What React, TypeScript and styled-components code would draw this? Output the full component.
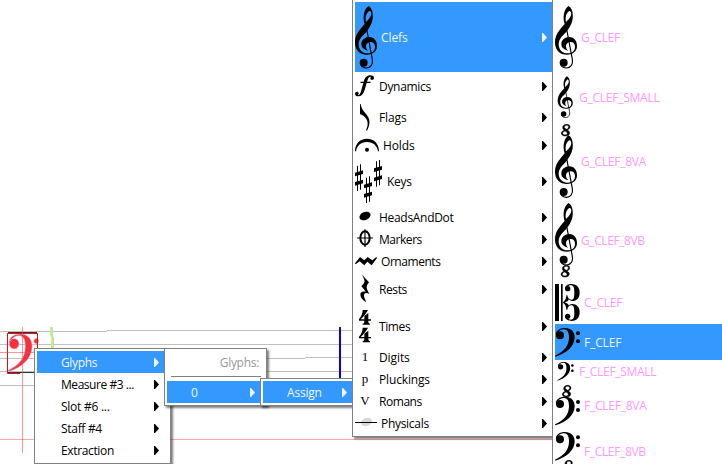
import React from "react";
import styled, { createGlobalStyle } from "styled-components";

const GlobalStyle = createGlobalStyle`
  * { box-sizing: border-box; }
  body { margin: 0; background: #fff; overflow: hidden; }
`;

const Desktop = styled.main`
  position: relative;
  width: 722px;
  height: 464px;
  overflow: hidden;
  background: #fff;
  font: 12px/16px "Open Sans", "Noto Sans", sans-serif;
  color: #000;
`;

const Score = styled.svg`
  position: absolute;
  inset: 0;
`;

const Menu = styled.nav<{ $x: number; $y: number; $w: number; $h: number; $shadow?: boolean }>`
  position: absolute;
  left: ${(p) => p.$x}px;
  top: ${(p) => p.$y}px;
  width: ${(p) => p.$w}px;
  height: ${(p) => p.$h}px;
  padding: 2px;
  border: 1px solid #808080;
  background: #fff;
  display: flex;
  flex-direction: column;
  box-shadow: ${(p) => (p.$shadow ? "2px 2px 2px rgba(0, 0, 0, 0.5)" : "none")};
`;

const IconMenu = styled(Menu)`
  padding-right: 0;
`;

const Row = styled.div<{ $h?: number; $active?: boolean; $tint?: string; $indent?: number; $end?: number }>`
  flex: none;
  display: flex;
  align-items: center;
  gap: 4px;
  height: ${(p) => p.$h ?? 22}px;
  padding-left: ${(p) => p.$indent ?? 0}px;
  padding-right: ${(p) => p.$end ?? 6}px;
  background: ${(p) => (p.$active ? "#3399ff" : "transparent")};
  color: ${(p) => (p.$active ? "#f4f4f4" : p.$tint ?? "#000")};
`;

const IconSlot = styled.span`
  flex: none;
  display: flex;
  justify-content: center;
  min-width: 20px;
  color: #000;

  svg { display: block; overflow: visible; }
`;

const Label = styled.span<{ $ls?: number; $odd?: boolean }>`
  flex: 1;
  padding-top: ${(p) => (p.$odd ? 1 : 2)}px;
  white-space: nowrap;
  letter-spacing: ${(p) => p.$ls ?? 0}px;
`;

const Heading = styled.div`
  height: 25px;
  padding: 4px 5px 0 0;
  text-align: right;
  color: #999;
  letter-spacing: -0.3px;
`;

const Divider = styled.hr`
  width: 90px;
  height: 1px;
  margin: 0 0 4px 4px;
  border: 0;
  background: #808080;
`;

const SerifGlyph = styled.span`
  font: 13px/14px "Liberation Serif", serif;
  padding-bottom: 1px;
`;

const Arrow = () => (
  <svg width="5" height="9" viewBox="0 0 5 9">
    <path d="M0 0H1L5 4.5L1 9H0Z" fill="currentColor" />
  </svg>
);

const GShape = () => (
  <g>
    <path
      fillRule="evenodd"
      d="M29 54C22 34 27 8 41 0C51 7 55 20 53 38C50 57 40 70 30 82C18 94 11 102 11 116C12 132 22 142 38 142C53 141 60 134 60 122C60 113 55 108 47 108C38 108 33 114 33 120C33 127 35 131 40 134C27 132 19 124 19 115C19 102 30 93 43 93C58 93 66 106 66 120C66 136 54 146 36 146C15 146 0 132 0 110C0 87 13 73 23 61ZM33 48C46 37 51 26 48 19C46 14 42 14 40 17C32 25 31 34 33 48Z"
    />
    <path d="M31 48L52 160C55 176 46 186 34 186C26 186 20 183 17 175" fill="none" stroke="currentColor" strokeWidth="3.5" />
    <circle cx="26" cy="170" r="12" />
  </g>
);

const EightShape = () => (
  <path
    fillRule="evenodd"
    stroke="currentColor"
    strokeWidth="1.5"
    d="M16 0C22 0 26 3 26 8C26 12 22 15 18 17C22 20 25 22 25 26C25 32 19 35 12 35C5 35 0 32 0 27C0 22 4 20 9 18C6 15 4 13 4 10C4 4 9 0 16 0ZM16 3C12 3 9 5 9 8C9 11 12 13 16 15C20 13 22 11 22 7C22 5 19 3 16 3ZM11 20C6 22 4 24 4 27C4 30 7 32 11 32C16 32 18 30 18 27C18 24 15 22 11 20Z"
  />
);

const FShape = () => (
  <g>
    <path d="M3 22C1 8 14 0 30 0C48 0 59 11 59 28C59 56 34 76 1 86L0 83C27 71 42 54 42 28C42 12 37 4 27 4C18 4 11 8 9 15Z" />
    <circle cx="15" cy="22" r="12" />
    <circle cx="69" cy="16" r="6" />
    <circle cx="69" cy="40" r="6" />
  </g>
);

const GClef = () => (
  <svg width="22" height="63" viewBox="0 0 66 189" fill="currentColor"><GShape /></svg>
);
const GClefSmall = () => (
  <svg width="16" height="42" viewBox="-3 -1 70 189" fill="currentColor" preserveAspectRatio="none"><GShape /></svg>
);
const GClefUp = () => (
  <svg width="22" height="75" viewBox="0 0 66 225" fill="currentColor">
    <g transform="translate(19 1)"><EightShape /></g>
    <g transform="translate(0 34)"><GShape /></g>
  </svg>
);
const GClefDown = () => (
  <svg width="22" height="74" viewBox="0 0 66 222" fill="currentColor">
    <GShape />
    <g transform="translate(18 187)"><EightShape /></g>
  </svg>
);
const CClef = () => (
  <svg width="25" height="37" viewBox="0 0 75 111" fill="currentColor">
    <path d="M0 0H12V111H0ZM18 0H23V111H18Z" />
    {["", "matrix(1 0 0 -1 0 111)"].map((t) => (
      <g key={t} transform={t}>
        <path d="M30 14C31 4 40 0 50 0C66 0 74 11 74 26C74 42 65 51 52 51C46 51 43 48 42 46C39 52 35 54 27 56H22C30 51 34 44 34 34H37C38 42 43 47 49 47C56 47 58 41 58 26C58 11 56 4 47 4C43 4 40 6 39 8Z" />
        <circle cx="38" cy="14" r="8" />
      </g>
    ))}
  </svg>
);
const FClef = () => (
  <svg width="25" height="29" viewBox="0 0 75 87" fill="currentColor"><FShape /></svg>
);
const FClefSmall = () => (
  <svg width="17" height="19" viewBox="0 0 75 87" fill="currentColor"><FShape /></svg>
);
const FClefUp = () => (
  <svg width="25" height="41" viewBox="0 0 75 123" fill="currentColor">
    <g transform="translate(22 1)"><EightShape /></g>
    <g transform="translate(0 35)"><FShape /></g>
  </svg>
);
const FClefDown = () => (
  <svg width="25" height="40" viewBox="0 0 75 120" fill="currentColor">
    <FShape />
    <g transform="translate(26 85)"><EightShape /></g>
  </svg>
);

const Forte = () => (
  <svg width="20" height="23" viewBox="0 0 60 69" fill="currentColor">
    <path d="M17 20H26C29 8 36 1 46 1C53 1 57 4 57 9C57 13 54 15 51 15C48 15 46 13 46 10C46 8 47 7 48 5C42 4 39 10 36 20H47L46 24H35L29 45C25 57 19 64 10 64C4 64 0 61 0 56C0 52 3 50 6 50C9 50 11 52 11 55C11 58 9 59 8 60C14 61 17 54 19 45L25 24H16Z" />
  </svg>
);
const Flag = () => (
  <svg width="10" height="27" viewBox="0 0 30 81" fill="currentColor">
    <path d="M0 0H2C4 15 12 22 20 32C29 43 33 58 21 80L18 79C26 61 24 50 15 40C10 35 5 32 0 31Z" />
  </svg>
);
const Fermata = () => (
  <svg width="24" height="16" viewBox="0 0 72 48" fill="currentColor">
    <path d="M0 40C0 18 14 2 36 2C58 2 72 18 72 40H69C66 23 55 12 36 12C17 12 6 23 3 40Z" />
    <circle cx="36" cy="35" r="6" />
  </svg>
);
const Sharps = () => (
  <svg width="28" height="43" viewBox="0 0 84 129" fill="currentColor">
    {[[0, 13], [27, 49], [57, 0]].map(([x, y]) => (
      <g key={x} transform={`translate(${x} ${y})`}>
        <path d="M6 4H9V80H6ZM15 0H18V76H15Z" />
        <path d="M0 25L24 18V29L0 36ZM0 53L24 46V57L0 64Z" />
      </g>
    ))}
  </svg>
);
const NoteHead = () => (
  <svg width="12" height="12" viewBox="0 0 12 12">
    <ellipse cx="6" cy="5" rx="5.8" ry="4" transform="rotate(-22 6 5)" fill="currentColor" />
  </svg>
);
const Coda = () => (
  <svg width="16" height="20" viewBox="0 0 48 60" fill="none" stroke="currentColor">
    <ellipse cx="24" cy="27" rx="14" ry="20" strokeWidth="6" />
    <path d="M24 1V54M0 27H48" strokeWidth="3.5" />
  </svg>
);
const Mordent = () => (
  <svg width="22" height="10" viewBox="0 0 66 30" fill="currentColor">
    <path d="M0 22L15 3L28 13L38 3L52 13L64 3L66 6L50 28L37 17L28 28L14 16L2 25Z" />
  </svg>
);
const QuarterRest = () => (
  <svg width="10" height="28" viewBox="0 0 30 84" fill="currentColor">
    <path d="M8 0C14 9 22 16 27 22C20 30 18 37 22 45L28 57C19 52 12 54 12 61C12 67 15 73 18 79L16 80C8 74 1 66 1 59C1 51 9 48 17 51C13 44 8 39 4 33C12 27 16 20 12 12C10 7 8 4 7 1Z" />
  </svg>
);
const TimeFour = () => (
  <svg width="12" height="33" viewBox="0 0 36 99" fill="currentColor">
    {[0, 53].map((y) => (
      <path
        key={y}
        transform={`translate(0 ${y})`}
        d="M11 0H27C21 12 12 21 5 28H16V18L28 9V28H36V32H28C28 38 29 40 33 41V44H11V41C15 40 16 38 16 32H0V27C7 19 11 10 11 0Z"
      />
    ))}
  </svg>
);
const LedgerHead = () => (
  <svg width="22" height="12" viewBox="0 0 22 12">
    <ellipse cx="11.5" cy="5" rx="5.6" ry="4" transform="rotate(-18 11.5 5)" fill="#d8d8d8" />
    <path d="M0 5.5H22" stroke="#000" />
  </svg>
);

type Entry = { name: string; h: number; icon: React.ReactNode; ls?: number; active?: boolean };

const families: Entry[] = [
  { name: "Clefs", h: 70, icon: <GClef />, ls: -0.1, active: true },
  { name: "Dynamics", h: 29, icon: <Forte />, ls: -0.3 },
  { name: "Flags", h: 33, icon: <Flag />, ls: -0.1 },
  { name: "Holds", h: 23, icon: <Fermata />, ls: -0.1 },
  { name: "Keys", h: 49, icon: <Sharps />, ls: -0.3 },
  { name: "HeadsAndDot", h: 22, icon: <NoteHead />, ls: -0.3 },
  { name: "Markers", h: 22, icon: <Coda />, ls: -0.45 },
  { name: "Ornaments", h: 22, icon: <Mordent />, ls: -0.45 },
  { name: "Rests", h: 34, icon: <QuarterRest />, ls: -0.4 },
  { name: "Times", h: 40, icon: <TimeFour />, ls: -0.4 },
  { name: "Digits", h: 22, icon: <SerifGlyph>1</SerifGlyph>, ls: -0.1 },
  { name: "Pluckings", h: 22, icon: <SerifGlyph>p</SerifGlyph>, ls: -0.15 },
  { name: "Romans", h: 22, icon: <SerifGlyph>V</SerifGlyph>, ls: -0.45 },
  { name: "Physicals", h: 22, icon: <LedgerHead />, ls: -0.3 },
];

const clefs: Entry[] = [
  { name: "G_CLEF", h: 70, icon: <GClef />, ls: -0.3 },
  { name: "G_CLEF_SMALL", h: 50, icon: <GClefSmall />, ls: -0.25 },
  { name: "G_CLEF_8VA", h: 78, icon: <GClefUp />, ls: -0.25 },
  { name: "G_CLEF_8VB", h: 80, icon: <GClefDown />, ls: -0.4 },
  { name: "C_CLEF", h: 44, icon: <CClef />, ls: -0.2 },
  { name: "F_CLEF", h: 36, icon: <FClef />, ls: -0.15, active: true },
  { name: "F_CLEF_SMALL", h: 22, icon: <FClefSmall />, ls: -0.3 },
  { name: "F_CLEF_8VA", h: 47, icon: <FClefUp />, ls: -0.25 },
  { name: "F_CLEF_8VB", h: 45, icon: <FClefDown />, ls: -0.35 },
];

const actions = [
  { name: "Glyphs", ls: -0.35, active: true },
  { name: "Measure #3 ...", ls: -0.45 },
  { name: "Slot #6 ...", ls: -0.25 },
  { name: "Staff #4", ls: -0.3 },
  { name: "Extraction", ls: -0.35 },
];

const ScoreSheet = () => (
  <Score width="722" height="464" viewBox="0 0 722 464">
    <g fill="none" stroke="#c0c0c0">
      <path d="M0 331.5H107M107 330.5H352M0 344.5H352M0 358.5H305M305 357.5H352M0 371.5H352M0 385.5H352" />
    </g>
    <rect x="0" y="439" width="552" height="1" fill="#ffa8a8" />
    <path d="M51 327V336M52 335V348" stroke="#c8f56a" strokeWidth="2" />
    <path d="M52.5 327V337M53.5 337V348" stroke="#c8c8f4" />
    <path d="M340 327V378" stroke="#0000ff" strokeWidth="2" />
    <path d="M340 327V330" stroke="#222" strokeWidth="2" />
    <g transform="translate(8 334) scale(0.41 0.44)" fill="#f8303c" stroke="#c8c8f4" strokeWidth="1.5">
      <FShape />
    </g>
    <path d="M8 332.5H37M8 372.5H37" stroke="#333" />
    <path d="M7.5 333.5H37.5V373M7.5 333V373.5H20" fill="none" stroke="#e80c0c" />
    <path d="M22.5 327V453M0 352.5H34" stroke="#ff5050" strokeOpacity="0.6" />
  </Score>
);

export default function App() {
  return (
    <>
      <GlobalStyle />
      <Desktop>
        <ScoreSheet />
        <Menu $x={34} $y={348} $w={137} $h={116} $shadow>
          {actions.map((a) => (
            <Row key={a.name} $active={a.active} $indent={24} $end={9}>
              <Label $ls={a.ls}>{a.name}</Label>
              <Arrow />
            </Row>
          ))}
        </Menu>
        <Menu $x={164} $y={348} $w={103} $h={58} $shadow>
          <Heading>Glyphs:</Heading>
          <Divider />
          <Row $active $indent={24} $end={9}>
            <Label>0</Label>
            <Arrow />
          </Row>
        </Menu>
        <Menu $x={260} $y={378} $w={103} $h={28} $shadow>
          <Row $active $indent={24} $end={13}>
            <Label $ls={-0.2}>Assign</Label>
            <Arrow />
          </Row>
        </Menu>
        <IconMenu $x={352} $y={-1} $w={201} $h={438} $shadow>
          {families.map((f) => (
            <Row key={f.name} $h={f.h} $active={f.active} $end={5}>
              <IconSlot>{f.icon}</IconSlot>
              <Label $ls={f.ls} $odd={f.h % 2 === 1}>{f.name}</Label>
              <Arrow />
            </Row>
          ))}
        </IconMenu>
        <IconMenu $x={552} $y={-1} $w={180} $h={480}>
          {clefs.map((c) => (
            <Row key={c.name} $h={c.h} $active={c.active} $tint="#ff99ff">
              <IconSlot>{c.icon}</IconSlot>
              <Label $ls={c.ls} $odd={c.h % 2 === 1}>{c.name}</Label>
            </Row>
          ))}
        </IconMenu>
      </Desktop>
    </>
  );
}
